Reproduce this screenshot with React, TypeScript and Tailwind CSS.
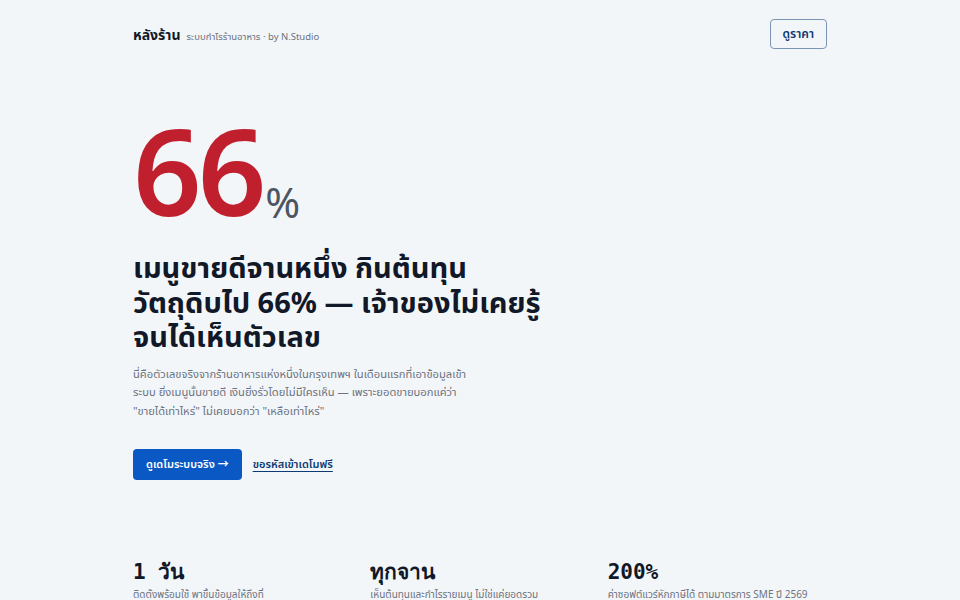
import React from "react";

const thai = { fontFamily: '"Noto Sans", "Noto Sans Thai", "Noto Sans CJK SC", sans-serif' };
const mono = { fontFamily: '"DejaVu Sans Mono", "Noto Sans", monospace' };

const stats = [
  { value: "1 วัน", note: "ติดตั้งพร้อมใช้ พาขึ้นข้อมูลให้ถึงที่" },
  { value: "ทุกจาน", note: "เห็นต้นทุนและกำไรรายเมนู ไม่ใช่แค่ยอดรวม" },
  { value: "200%", note: "ค่าซอฟต์แวร์หักภาษีได้ ตามมาตรการ SME ปี 2569" },
];

export default function App() {
  return (
    <div className="min-h-[600px] w-full bg-[#f3f6f9] text-[#111827]" style={thai}>
      <div className="mx-auto w-[694px]">
        <header className="flex h-[68px] items-center justify-between">
          <div className="flex items-baseline gap-[6px]">
            <span className="text-[14px] font-bold text-[#111827]">หลังร้าน</span>
            <span className="text-[9.5px] text-[#6b7280]">ระบบกำไรร้านอาหาร · by N.Studio</span>
          </div>
          <button className="h-[30px] rounded-[4px] border border-[#7d95b4] px-[12px] text-[12px] font-semibold text-[#0b3a75]">
            ดูราคา
          </button>
        </header>

        <section className="pt-[52px]">
          <div className="flex items-end leading-none">
            <span
              className="text-[120px] font-semibold leading-[100px] tracking-[-4px] text-[#c0202e]"
              style={{ fontFamily: '"Noto Sans", sans-serif' }}
            >
              66
            </span>
            <span
              className="mb-[-3px] ml-[3px] text-[42px] text-[#4b5563]"
              style={{ fontFamily: '"Noto Sans", sans-serif' }}
            >
              %
            </span>
          </div>

          <h1 className="mt-[30px] text-[29px] font-bold leading-[34.5px] text-[#111827]">
            เมนูขายดีจานหนึ่ง กินต้นทุน
            <br />
            วัตถุดิบไป 66% — เจ้าของไม่เคยรู้
            <br />
            จนได้เห็นตัวเลข
          </h1>

          <p className="mt-[11px] w-[360px] text-[11.2px] leading-[18.5px] text-[#6b7280]">
            นี่คือตัวเลขจริงจากร้านอาหารแห่งหนึ่งในกรุงเทพฯ ในเดือนแรกที่เอาข้อมูลเข้า
            <br />
            ระบบ ยิ่งเมนูนั้นขายดี เงินยิ่งรั่วโดยไม่มีใครเห็น — เพราะยอดขายบอกแค่ว่า
            <br />
            "ขายได้เท่าไหร่" ไม่เคยบอกว่า "เหลือเท่าไหร่"
          </p>

          <div className="mt-[29px] flex items-center gap-[11px]">
            <button className="h-[31px] rounded-[4px] bg-[#0a58c4] px-[13px] text-[11px] font-semibold text-white">
              ดูเดโมระบบจริง →
            </button>
            <a className="text-[11px] font-semibold text-[#0b3a75] underline underline-offset-[3px]">
              ขอรหัสเข้าเดโมฟรี
            </a>
          </div>
        </section>

        <section className="mt-[78px] grid grid-cols-3 gap-[18px]">
          {stats.map((s) => (
            <div key={s.value}>
              <div className="text-[21px] font-bold leading-[28px] text-[#111827]" style={mono}>
                {s.value}
              </div>
              <div className="mt-[1px] text-[10px] text-[#6b7280]">{s.note}</div>
            </div>
          ))}
        </section>
      </div>
    </div>
  );
}
